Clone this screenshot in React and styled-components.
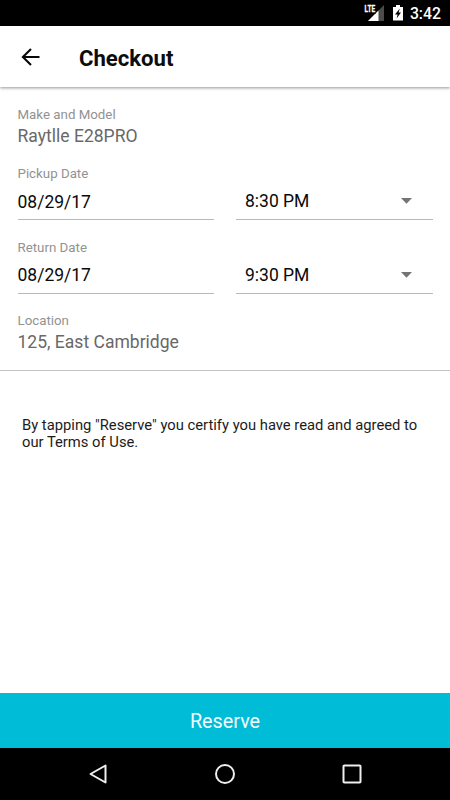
import React, { useState } from 'react';
import styled, { createGlobalStyle } from 'styled-components';

const GlobalStyle = createGlobalStyle`
  body {
    margin: 0;
    background: #fff;
    font-family: Roboto, sans-serif;
  }

  * {
    box-sizing: border-box;
  }
`;

const Screen = styled.div`
  display: flex;
  flex-direction: column;
  width: 450px;
  height: 800px;
  overflow: hidden;
  background: #fff;
`;

const StatusBar = styled.div`
  display: flex;
  flex: none;
  justify-content: flex-end;
  height: 26px;
  padding-right: 9px;
  background: #000;
`;

const StatusIcons = styled.svg`
  display: block;
  margin-right: 6px;
`;

const NetworkLabel = styled.text`
  font-size: 9.5px;
  font-weight: 700;
  fill: #fff;
  stroke: #fff;
  stroke-width: 0.3px;
`;

const Clock = styled.span`
  font-size: 15.8px;
  font-weight: 500;
  line-height: 28px;
  color: #fff;
`;

const AppBar = styled.header`
  display: flex;
  flex: none;
  align-items: center;
  height: 61px;
  padding: 1px 18px 0 17px;
  background: #fff;
  box-shadow: 0 1px 3px rgba(0, 0, 0, 0.42);
`;

const BackButton = styled.button`
  display: flex;
  padding: 0;
  border: 0;
  margin-right: 35px;
  background: none;
`;

const Title = styled.h1`
  margin: 0;
  padding-top: 1px;
  font-size: 22.1px;
  font-weight: 700;
  line-height: 28px;
  color: #0c0c0c;
`;

const Details = styled.section`
  flex: none;
  height: 284px;
  padding: 19px 18px 0 17.5px;
  border-bottom: 1px solid #c2c2c2;
`;

const Field = styled.div`
  margin-bottom: ${(props) => props.$gap || '18.5px'};
`;

const Label = styled.div`
  font-size: 13.3px;
  line-height: 18px;
  color: #929292;
`;

const Value = styled.div`
  font-size: 17.55px;
  line-height: 24px;
  color: #686868;
`;

const DateRow = styled.div`
  display: grid;
  grid-template-columns: 196.5px 196.5px;
  column-gap: 22px;
`;

const PickerBox = styled.div`
  display: flex;
  align-items: center;
  justify-content: space-between;
  height: 37px;
  padding: ${(props) => (props.$inset ? '0 21px 0 9px' : '1px 0 0')};
  border-bottom: 1px solid #b9b9b9;
  font-size: 17.5px;
  line-height: 24px;
  color: #0a0a0a;
`;

const Terms = styled.p`
  margin: 46px 22px 0;
  font-size: 14.77px;
  line-height: 17px;
  color: #1c1c1c;
`;

const ReserveButton = styled.button`
  flex: none;
  height: 55px;
  padding: 2px 0 0;
  border: 0;
  margin-top: auto;
  background: #00bcd7;
  font-family: inherit;
  font-size: 19.8px;
  color: #f4fdff;
`;

const NavBar = styled.nav`
  display: flex;
  flex: none;
  align-items: center;
  justify-content: space-between;
  height: 52px;
  padding: 0 86px;
  background: #000;
`;

const StatusGlyphs = () => (
  <StatusIcons width="40" height="26" viewBox="0 0 40 26">
    <path d="M20 5V21H4Z" fill="#4b4b4b" />
    <path d="M14.5 10.5V21H4Z" fill="#fff" />
    <path d="M0 4H12V13.5H0Z" fill="#000" />
    <NetworkLabel x="0.6" y="12.2" textLength="10.5" lengthAdjust="spacingAndGlyphs">
      LTE
    </NetworkLabel>
    <path d="M32 5H36V7H39V20.5H29V7H32Z" fill="#fff" />
    <path d="M35.8 8.5L31 14.5H33.6L32.6 18.5L37 12.6H34.6Z" fill="#000" />
  </StatusIcons>
);

const BackArrow = () => (
  <svg width="27" height="26" viewBox="0 0 27 26" fill="none" stroke="#080808" strokeWidth="2.1">
    <path d="M22.5 13H6M14 4.9L5.9 13L14 21.1" />
  </svg>
);

const Caret = () => (
  <svg width="11" height="6" viewBox="0 0 11 6">
    <path d="M0 0H11L5.5 5.7Z" fill="#747474" />
  </svg>
);

const DateTimeField = ({ label, date, time }) => (
  <Field>
    <Label>{label}</Label>
    <DateRow>
      <PickerBox>{date}</PickerBox>
      <PickerBox $inset>
        {time}
        <Caret />
      </PickerBox>
    </DateRow>
  </Field>
);

const App = () => {
  const [booking] = useState({
    model: 'Raytlle E28PRO',
    pickup: { date: '08/29/17', time: '8:30 PM' },
    dropoff: { date: '08/29/17', time: '9:30 PM' },
    location: '125, East Cambridge',
  });

  return (
    <Screen>
      <GlobalStyle />
      <StatusBar>
        <StatusGlyphs />
        <Clock>3:42</Clock>
      </StatusBar>

      <AppBar>
        <BackButton aria-label="Back">
          <BackArrow />
        </BackButton>
        <Title>Checkout</Title>
      </AppBar>

      <Details>
        <Field $gap="17px">
          <Label>Make and Model</Label>
          <Value>{booking.model}</Value>
        </Field>
        <DateTimeField label="Pickup Date" {...booking.pickup} />
        <DateTimeField label="Return Date" {...booking.dropoff} />
        <Field>
          <Label>Location</Label>
          <Value>{booking.location}</Value>
        </Field>
      </Details>

      <Terms>
        By tapping "Reserve" you certify you have read and agreed to our Terms of Use.
      </Terms>

      <ReserveButton>Reserve</ReserveButton>

      {/* Android system navigation */}
      <NavBar>
        <svg width="24" height="24" viewBox="0 0 24 24" fill="none" stroke="#eee" strokeWidth="2">
          <path d="M19.5 3.5V20.5L4.5 12Z" strokeLinejoin="round" />
        </svg>
        <svg width="24" height="24" viewBox="0 0 24 24" fill="none" stroke="#eee" strokeWidth="2">
          <circle cx="12" cy="12" r="9" />
        </svg>
        <svg width="24" height="24" viewBox="0 0 24 24" fill="none" stroke="#eee" strokeWidth="2">
          <rect x="3.5" y="3.5" width="17" height="17" rx="0.8" />
        </svg>
      </NavBar>
    </Screen>
  );
};

export default App;
